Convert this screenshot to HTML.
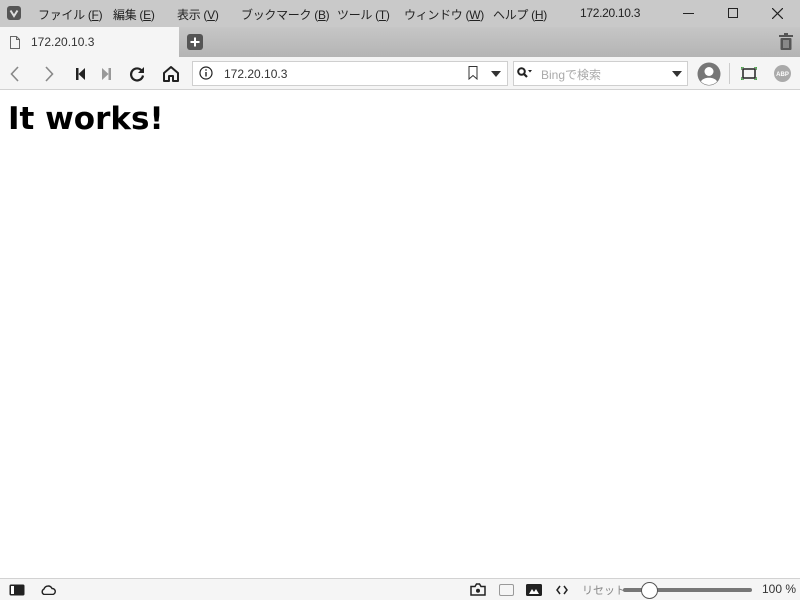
<!DOCTYPE html>
<html><head><meta charset="utf-8"><style>
*{margin:0;padding:0;box-sizing:border-box}
body{width:800px;height:600px;overflow:hidden;font-family:"Liberation Sans","Noto Sans CJK JP",sans-serif;background:#fff;position:relative}
.abs{position:absolute;white-space:nowrap}
#title{left:0;top:0;width:800px;height:27px;background:#c9c9c9;font-size:12px;color:#222}
#title span{position:absolute;top:6px;letter-spacing:-0.3px}
#tabs{left:0;top:27px;width:800px;height:30px;background:linear-gradient(#c6c6c6,#b4b4b4)}
#tab{left:0;top:27px;width:179px;height:30px;background:#f5f5f5;font-size:12px;color:#333}
#tb{left:0;top:57px;width:800px;height:33px;background:#f5f5f5;border-bottom:1px solid #d2d2d2}
.field{background:#fff;border:1px solid #cfcfcf;height:25px;top:4px}
h1{position:absolute;left:8px;top:101px;font-family:"DejaVu Sans",Verdana,sans-serif;font-weight:bold;font-size:31px;color:#000;white-space:nowrap}
#st{left:0;top:578px;width:800px;height:22px;background:#f5f5f5;border-top:1px solid #d2d2d2;font-size:12px;color:#333}
</style></head><body>
<div id="title" class="abs">
<svg class="abs" style="left:7px;top:6px" width="14" height="14"><rect width="14" height="14" rx="3" fill="#555"/><path d="M3.5 4.5 L7 10 L10.5 4.5" stroke="#ddd" stroke-width="2" fill="none"/></svg>
<span style="left:38px">ファイル (<u>F</u>)</span>
<span style="left:113px">編集 (<u>E</u>)</span>
<span style="left:177px">表示 (<u>V</u>)</span>
<span style="left:241px">ブックマーク (<u>B</u>)</span>
<span style="left:337px">ツール (<u>T</u>)</span>
<span style="left:404px">ウィンドウ (<u>W</u>)</span>
<span style="left:493px">ヘルプ (<u>H</u>)</span>
<span style="left:580px">172.20.10.3</span>
<div class="abs" style="left:683px;top:13px;width:11px;height:1px;background:#222"></div>
<div class="abs" style="left:728px;top:8px;width:10px;height:10px;border:1px solid #222"></div>
<svg class="abs" style="left:772px;top:8px" width="11" height="11"><path d="M0 0L11 11M11 0L0 11" stroke="#222" stroke-width="1.2"/></svg>
</div>
<div id="tabs" class="abs">
<svg class="abs" style="left:187px;top:7px" width="16" height="16"><rect width="16" height="16" rx="3" fill="#555"/><path d="M8 3.5V12.5M3.5 8H12.5" stroke="#fff" stroke-width="2"/></svg>
<svg class="abs" style="left:779px;top:6px" width="14" height="17"><rect x="0" y="2" width="14" height="2" fill="#555"/><rect x="5" y="0" width="4" height="2" fill="#555"/><rect x="1.5" y="5" width="11" height="12" rx="1" fill="#555"/><path d="M5 7v8M7 7v8M9 7v8" stroke="#bbb" stroke-width="1"/></svg>
</div>
<div id="tab" class="abs">
<svg class="abs" style="left:10px;top:9px" width="10" height="13"><path d="M0.5 0.5H6.5L9.5 3.5V12.5H0.5Z M6.5 0.5V3.5H9.5" fill="none" stroke="#666"/></svg>
<span class="abs" style="left:31px;top:8px">172.20.10.3</span>
</div>
<div id="tb" class="abs">
<svg class="abs" style="left:10px;top:9px" width="10" height="16"><path d="M8 1L1.5 8L8 15" stroke="#888" stroke-width="1.6" fill="none"/></svg>
<svg class="abs" style="left:44px;top:9px" width="10" height="16"><path d="M2 1L8.5 8L2 15" stroke="#888" stroke-width="1.6" fill="none"/></svg>
<svg class="abs" style="left:76px;top:11px" width="10" height="12"><rect x="0" y="0" width="2.5" height="12" fill="#222"/><path d="M9 0V12L2.5 6Z" fill="#222"/></svg>
<svg class="abs" style="left:101px;top:11px" width="10" height="12"><rect x="7.5" y="0" width="2.5" height="12" fill="#999"/><path d="M1 0V12L7.5 6Z" fill="#999"/></svg>
<svg class="abs" style="left:129px;top:9px" width="16" height="16"><path d="M13 5A6 6 0 1 0 14 9.5" stroke="#222" stroke-width="2.2" fill="none"/><path d="M15 1V7H9Z" fill="#222"/></svg>
<svg class="abs" style="left:162px;top:8px" width="18" height="17"><path d="M2 8L9 2L16 8V16H11V11H7V16H2Z" stroke="#222" stroke-width="2" fill="none" stroke-linejoin="round"/></svg>
<div class="abs field" style="left:192px;width:316px"></div>
<svg class="abs" style="left:199px;top:9px" width="14" height="14"><circle cx="7" cy="7" r="6" stroke="#222" stroke-width="1.2" fill="none"/><rect x="6.3" y="6" width="1.4" height="4.5" fill="#222"/><rect x="6.3" y="3.3" width="1.4" height="1.4" fill="#222"/></svg>
<span class="abs" style="left:224px;top:10px;font-size:12px;color:#333">172.20.10.3</span>
<svg class="abs" style="left:468px;top:9px" width="10" height="14"><path d="M1 0.5H9V13L5 9.5L1 13Z" stroke="#333" fill="none"/></svg>
<svg class="abs" style="left:491px;top:14px" width="10" height="6"><path d="M0 0H10L5 6Z" fill="#333"/></svg>
<div class="abs field" style="left:513px;width:175px"></div>
<svg class="abs" style="left:517px;top:10px" width="16" height="12"><circle cx="4.5" cy="4.5" r="3.3" stroke="#222" stroke-width="2" fill="none"/><path d="M7 7L10 10" stroke="#222" stroke-width="2.2"/><path d="M11 3H15L13 5.5Z" fill="#222"/></svg>
<span class="abs" style="left:541px;top:9px;font-size:12px;color:#aaa">Bingで検索</span>
<svg class="abs" style="left:672px;top:14px" width="10" height="6"><path d="M0 0H10L5 6Z" fill="#333"/></svg>
<svg class="abs" style="left:697px;top:5px" width="24" height="24"><circle cx="12" cy="12" r="11.5" fill="#777"/><circle cx="12" cy="9.5" r="4.5" fill="#fff"/><path d="M4 19.5C6 14.5 18 14.5 20 19.5A11 11 0 0 1 4 19.5Z" fill="#fff"/></svg>
<div class="abs" style="left:729px;top:6px;width:1px;height:21px;background:#ccc"></div>
<svg class="abs" style="left:741px;top:10px" width="16" height="13"><rect x="2" y="2" width="12" height="9" fill="none" stroke="#222" stroke-width="1.5"/><path d="M0 3V0H3M13 0H16V3M16 10V13H13M3 13H0V10" stroke="#3a9a3a" stroke-width="1.5" fill="none"/></svg>
<svg class="abs" style="left:774px;top:8px" width="17" height="17"><circle cx="8.5" cy="8.5" r="8.5" fill="#aaa"/><text x="8.5" y="10.8" font-size="6" font-family="Liberation Sans" font-weight="bold" fill="#fff" text-anchor="middle">ABP</text></svg>
</div>
<h1>It works!</h1>
<div id="st" class="abs">
<svg class="abs" style="left:9px;top:5px" width="16" height="12"><rect x="0.5" y="0.5" width="15" height="11" rx="1.5" fill="#222"/><rect x="2" y="2" width="3" height="8" fill="#fff"/></svg>
<svg class="abs" style="left:40px;top:5px" width="16" height="11"><path d="M4 10.5H12.5A3 3 0 0 0 12 4.5A4.3 4.3 0 0 0 4 5A3 3 0 0 0 4 10.5Z" stroke="#222" stroke-width="1.4" fill="none"/></svg>
<svg class="abs" style="left:470px;top:4px" width="16" height="13"><path d="M1 3.5H5L6.5 1H9.5L11 3.5H15V12H1Z" stroke="#222" stroke-width="1.5" fill="none"/><circle cx="8" cy="7.8" r="2" fill="#222"/></svg>
<div class="abs" style="left:499px;top:5px;width:15px;height:12px;border:1.5px solid #999;border-radius:2px"></div>
<svg class="abs" style="left:526px;top:5px" width="16" height="12"><rect width="16" height="12" rx="1.5" fill="#222"/><path d="M3 10L6 5L8 8L10 5L13 10Z" fill="#fff"/></svg>
<svg class="abs" style="left:556px;top:6px" width="12" height="10"><path d="M4 1L1 5L4 9M8 1L11 5L8 9" stroke="#222" stroke-width="1.5" fill="none"/></svg>
<span class="abs" style="left:582px;top:3px;color:#888;font-size:11px">リセット</span>
<div class="abs" style="left:623px;top:9px;width:129px;height:4px;border-radius:2px;background:#777"></div>
<div class="abs" style="left:641px;top:3px;width:17px;height:17px;border-radius:50%;background:#fff;border:1px solid #555"></div>
<span class="abs" style="left:762px;top:3px">100 %</span>
</div>
</body></html>
